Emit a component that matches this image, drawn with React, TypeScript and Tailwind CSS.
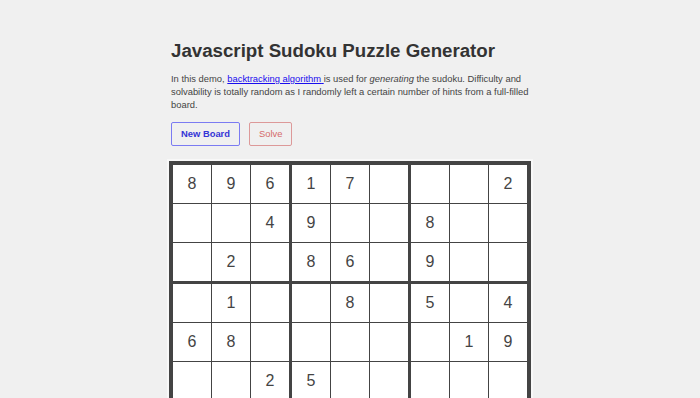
const board: (number | null)[][] = [
  [8, 9, 6, 1, 7, null, null, null, 2],
  [null, null, 4, 9, null, null, 8, null, null],
  [null, 2, null, 8, 6, null, 9, null, null],
  [null, 1, null, null, 8, null, 5, null, 4],
  [6, 8, null, null, null, null, null, 1, 9],
  [null, null, 2, 5, null, null, null, null, null],
  [null, 6, null, null, null, 4, null, 5, null],
  [4, null, null, 7, null, 9, null, null, 8],
  [null, null, 9, null, 3, null, 1, null, null],
];

function Cell({ value, row, col }: { value: number | null; row: number; col: number }) {
  const right =
    col === 8 ? 'border-r-0' : col === 2 || col === 5 ? 'border-r-[3px]' : 'border-r';
  const bottom =
    row === 8 ? 'border-b-0' : row === 2 || row === 5 ? 'border-b-[3px]' : 'border-b';

  return (
    <div
      className={`box-content flex h-[38px] w-[38px] shrink-0 items-center justify-center border-[#444] bg-white text-[16px] text-[#444] ${right} ${bottom}`}
    >
      {value ?? ''}
    </div>
  );
}

export default function App() {
  return (
    <div
      className="min-h-screen bg-[#f0f0f0] pt-[40px]"
      style={{ fontFamily: '"Liberation Sans", Arial, sans-serif' }}
    >
      <div className="mx-auto w-[362px]">
        {/* Heading */}
        <h1 className="pl-0.5 text-[18.7px] leading-[22px] font-bold text-[#333]">
          Javascript Sudoku Puzzle Generator
        </h1>

        <p className="mt-[10px] pl-0.5 text-[9.4px] leading-[13px] text-[#444]">
          In this demo,{' '}
          <a href="#" className="text-[#1a0dee] underline">
            backtracking algorithm{' '}
          </a>
          is used for <em>generating</em> the sudoku. Difficulty and solvability is
          totally random as I randomly left a certain number of hints from a
          full-filled board.
        </p>

        {/* Actions */}
        <div className="mt-[11px] flex gap-[9px] pl-0.5">
          <button className="h-[24px] rounded-[2px] border border-[#7b7bf2] px-[9px] text-[9.4px] font-bold text-[#3535d6]">
            New Board
          </button>
          <button className="h-[24px] rounded-[2px] border border-[#d99] px-[9px] text-[9.4px] text-[#d56a6a]">
            Solve
          </button>
        </div>

        {/* Board */}
        <div className="mt-[15px] inline-flex flex-col border-4 border-[#444] ring-2 ring-[#f8f8f8]">
          {board.map((row, r) => (
            <div key={r} className="flex">
              {row.map((value, c) => (
                <Cell key={c} value={value} row={r} col={c} />
              ))}
            </div>
          ))}
        </div>
      </div>
    </div>
  );
}
